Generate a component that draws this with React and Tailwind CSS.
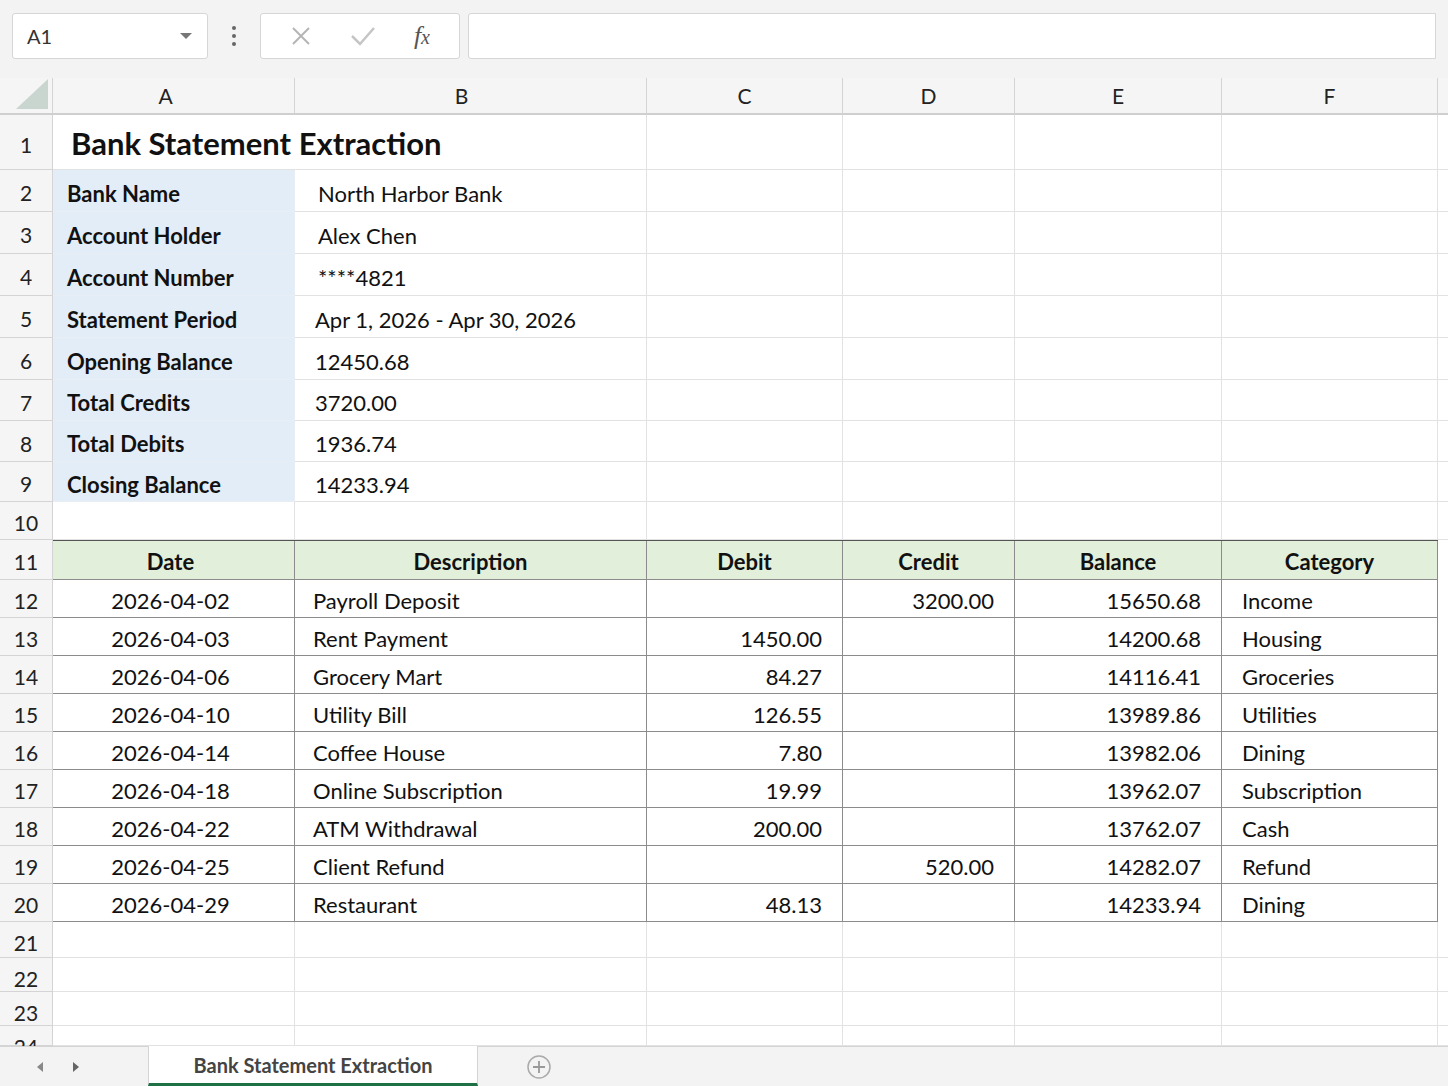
import React from "react";

const W = ["w-[242px]", "w-[352px]", "w-[196px]", "w-[172px]", "w-[207px]", "w-[216px]"];
const info = [
  ["Bank Name", "North Harbor Bank", "pl-[23px]"],
  ["Account Holder", "Alex Chen", "pl-[23px]"],
  ["Account Number", "****4821", "pl-[23px]"],
  ["Statement Period", "Apr 1, 2026 - Apr 30, 2026", "pl-[20px]"],
  ["Opening Balance", "12450.68", "pl-[20px]"],
  ["Total Credits", "3720.00", "pl-[20px]"],
  ["Total Debits", "1936.74", "pl-[20px]"],
  ["Closing Balance", "14233.94", "pl-[20px]"],
];
const infoH = ["h-[42px]", "h-[42px]", "h-[42px]", "h-[42px]", "h-[42px]", "h-[41px]", "h-[41px]", "h-[40px]"];
const tx = [
  ["2026-04-02", "Payroll Deposit", "", "3200.00", "15650.68", "Income"],
  ["2026-04-03", "Rent Payment", "1450.00", "", "14200.68", "Housing"],
  ["2026-04-06", "Grocery Mart", "84.27", "", "14116.41", "Groceries"],
  ["2026-04-10", "Utility Bill", "126.55", "", "13989.86", "Utilities"],
  ["2026-04-14", "Coffee House", "7.80", "", "13982.06", "Dining"],
  ["2026-04-18", "Online Subscription", "19.99", "", "13962.07", "Subscription"],
  ["2026-04-22", "ATM Withdrawal", "200.00", "", "13762.07", "Cash"],
  ["2026-04-25", "Client Refund", "", "520.00", "14282.07", "Refund"],
  ["2026-04-29", "Restaurant", "48.13", "", "14233.94", "Dining"],
];

function RowNum({ n, h }) {
  return (
    <div className={`w-[53px] shrink-0 ${h} flex items-center justify-center text-[21px] text-[#222] border-r border-b border-[#d4d4d4] bg-[#f5f5f5] pt-[5px]`}>{n}</div>
  );
}
function Empty({ i, h, extra = "" }) {
  return <div className={`${W[i]} shrink-0 ${h} border-r border-b border-[#e2e2e2] ${extra}`} />;
}

export default function App() {
  const font = { fontFamily: "Lato, 'Open Sans', sans-serif" };
  return (
    <div className="w-[1448px] h-[1086px] overflow-hidden bg-white text-[#111] flex flex-col" style={font}>
      <div className="h-[78px] shrink-0 bg-[#f3f3f3] flex items-center gap-0 px-[12px] pb-[8px] pt-[2px]">
        <div className="w-[196px] h-[46px] bg-white border border-[#d6d6d6] rounded-[3px] flex items-center justify-between px-[14px]">
          <span className="text-[20px] text-[#333]">A1</span>
          <svg width="14" height="8" viewBox="0 0 14 8"><path d="M1 1h12L7 7z" fill="#777" /></svg>
        </div>
        <div className="w-[52px] flex flex-col items-center gap-[4px]">
          <span className="w-[4px] h-[4px] rounded-full bg-[#666]" />
          <span className="w-[4px] h-[4px] rounded-full bg-[#666]" />
          <span className="w-[4px] h-[4px] rounded-full bg-[#666]" />
        </div>
        <div className="w-[200px] h-[46px] bg-white border border-[#d6d6d6] rounded-[3px] flex items-center justify-around px-[10px]">
          <svg width="22" height="22" viewBox="0 0 22 22"><path d="M3 3l16 16M19 3L3 19" stroke="#b5b5b5" strokeWidth="2" /></svg>
          <svg width="26" height="22" viewBox="0 0 26 22"><path d="M2 11l8 8L24 3" stroke="#c5c5c5" strokeWidth="2.5" fill="none" /></svg>
          <span className="text-[26px] italic text-[#555] leading-none" style={{ fontFamily: "'Liberation Serif', serif" }}>f<span className="text-[20px]">x</span></span>
        </div>
        <div className="ml-[8px] flex-1 h-[46px] bg-white border border-[#d6d6d6] rounded-l-[3px]" />
      </div>
      <div className="flex h-[37px] shrink-0 bg-[#f5f5f5] border-b-2 border-[#cfcfcf]">
        <div className="w-[53px] shrink-0 border-r border-[#d4d4d4] relative">
          <svg className="absolute right-[4px] bottom-[4px]" width="32" height="30" viewBox="0 0 32 30"><path d="M32 0V30H0z" fill="#c9d6cf" /></svg>
        </div>
        {["A", "B", "C", "D", "E", "F"].map((c, i) => (
          <div key={c} className={`${W[i]} shrink-0 border-r border-[#d4d4d4] flex items-center justify-center text-[21px] text-[#222] pt-[1px] ${i === 0 ? "pr-[16px]" : i === 1 ? "pr-[18px]" : ""}`}>{c}</div>
        ))}
        <div className="flex-1" />
      </div>
      <div className="flex h-[55px] shrink-0">
        <RowNum n={1} h="h-[55px]" />
        <div className="w-[594px] shrink-0 h-[55px] border-r border-b border-[#e2e2e2] flex items-center pl-[18px] text-[31px] font-bold pt-[2px]">Bank Statement Extraction</div>
        <Empty i={2} h="h-[55px]" /><Empty i={3} h="h-[55px]" /><Empty i={4} h="h-[55px]" /><Empty i={5} h="h-[55px]" />
        <div className="flex-1 border-b border-[#e2e2e2]" />
      </div>
      {info.map(([k, v, pl], r) => (
        <div key={k} className="flex shrink-0">
          <RowNum n={r + 2} h={infoH[r]} />
          <div className={`${W[0]} shrink-0 ${infoH[r]} bg-[#e3edf8] border-r border-b border-[#e9eef5] flex items-center pl-[14px] text-[22px] font-bold pt-[5px]`}>{k}</div>
          <div className={`${W[1]} shrink-0 ${infoH[r]} border-r border-b border-[#e2e2e2] flex items-center ${pl} text-[22px] pt-[5px]`}>{v}</div>
          <Empty i={2} h={infoH[r]} /><Empty i={3} h={infoH[r]} /><Empty i={4} h={infoH[r]} /><Empty i={5} h={infoH[r]} />
          <div className="flex-1 border-b border-[#e2e2e2]" />
        </div>
      ))}
      <div className="flex shrink-0">
        <RowNum n={10} h="h-[38px]" />
        {[0, 1, 2, 3, 4, 5].map((i) => <Empty key={i} i={i} h="h-[38px]" />)}
        <div className="flex-1 border-b border-[#e2e2e2]" />
      </div>
      <div className="flex shrink-0">
        <RowNum n={11} h="h-[40px]" />
        <div className="flex border-t border-[#555]">
          {["Date", "Description", "Debit", "Credit", "Balance", "Category"].map((h, i) => (
            <div key={h} className={`${W[i]} shrink-0 h-[39px] bg-[#e2efda] border-r border-b border-[#8c8c8c] flex items-center justify-center text-[22px] font-bold pt-[3px] ${i === 0 ? "pr-[6px]" : ""}`}>{h}</div>
          ))}
        </div>
        <div className="flex-1" />
      </div>
      {tx.map((t, r) => (
        <div key={r} className="flex shrink-0">
          <RowNum n={r + 12} h="h-[38px]" />
          {t.map((v, i) => {
            const align = i === 0 ? "justify-center pr-[6px]" : i === 1 ? "justify-start pl-[18px]" : i === 5 ? "justify-start pl-[20px]" : "justify-end pr-[20px]";
            return (
              <div key={i} className={`${W[i]} shrink-0 h-[38px] border-r border-b border-[#8c8c8c] flex items-center ${align} text-[22px] pt-[3px]`}>{v}</div>
            );
          })}
          <div className="flex-1" />
        </div>
      ))}
      {[["21", "h-[36px]"], ["22", "h-[34px]"], ["23", "h-[34px]"], ["24", "h-[20px]"]].map(([n, h]) => (
        <div key={n} className="flex shrink-0 overflow-hidden">
          <div className={`w-[53px] shrink-0 ${h} flex justify-center items-start text-[21px] text-[#222] border-r border-b border-[#d4d4d4] bg-[#f5f5f5] pt-[5px]`}>{n}</div>
          {[0, 1, 2, 3, 4, 5].map((i) => <Empty key={i} i={i} h={h} />)}
          <div className="flex-1 border-b border-[#e2e2e2]" />
        </div>
      ))}
      <div className="flex-1 bg-[#f3f3f3] border-t border-[#d4d4d4] flex items-stretch">
        <div className="w-[148px] flex items-center gap-[28px] pl-[36px]">
          <svg width="8" height="12" viewBox="0 0 8 12"><path d="M7 1L1 6l6 5z" fill="#888" /></svg>
          <svg width="8" height="12" viewBox="0 0 8 12"><path d="M1 1l6 5-6 5z" fill="#666" /></svg>
        </div>
        <div className="w-[330px] -mt-[1px] bg-white border-x border-[#d4d4d4] border-b-[3px] border-b-[#1e7145] flex items-center justify-center text-[20px] font-bold text-[#444]">Bank Statement Extraction</div>
        <div className="ml-[48px] flex items-center">
          <svg width="26" height="26" viewBox="0 0 26 26"><circle cx="13" cy="13" r="11" fill="none" stroke="#aaa" strokeWidth="1.5" /><path d="M13 7v12M7 13h12" stroke="#999" strokeWidth="1.8" /></svg>
        </div>
      </div>
    </div>
  );
}
